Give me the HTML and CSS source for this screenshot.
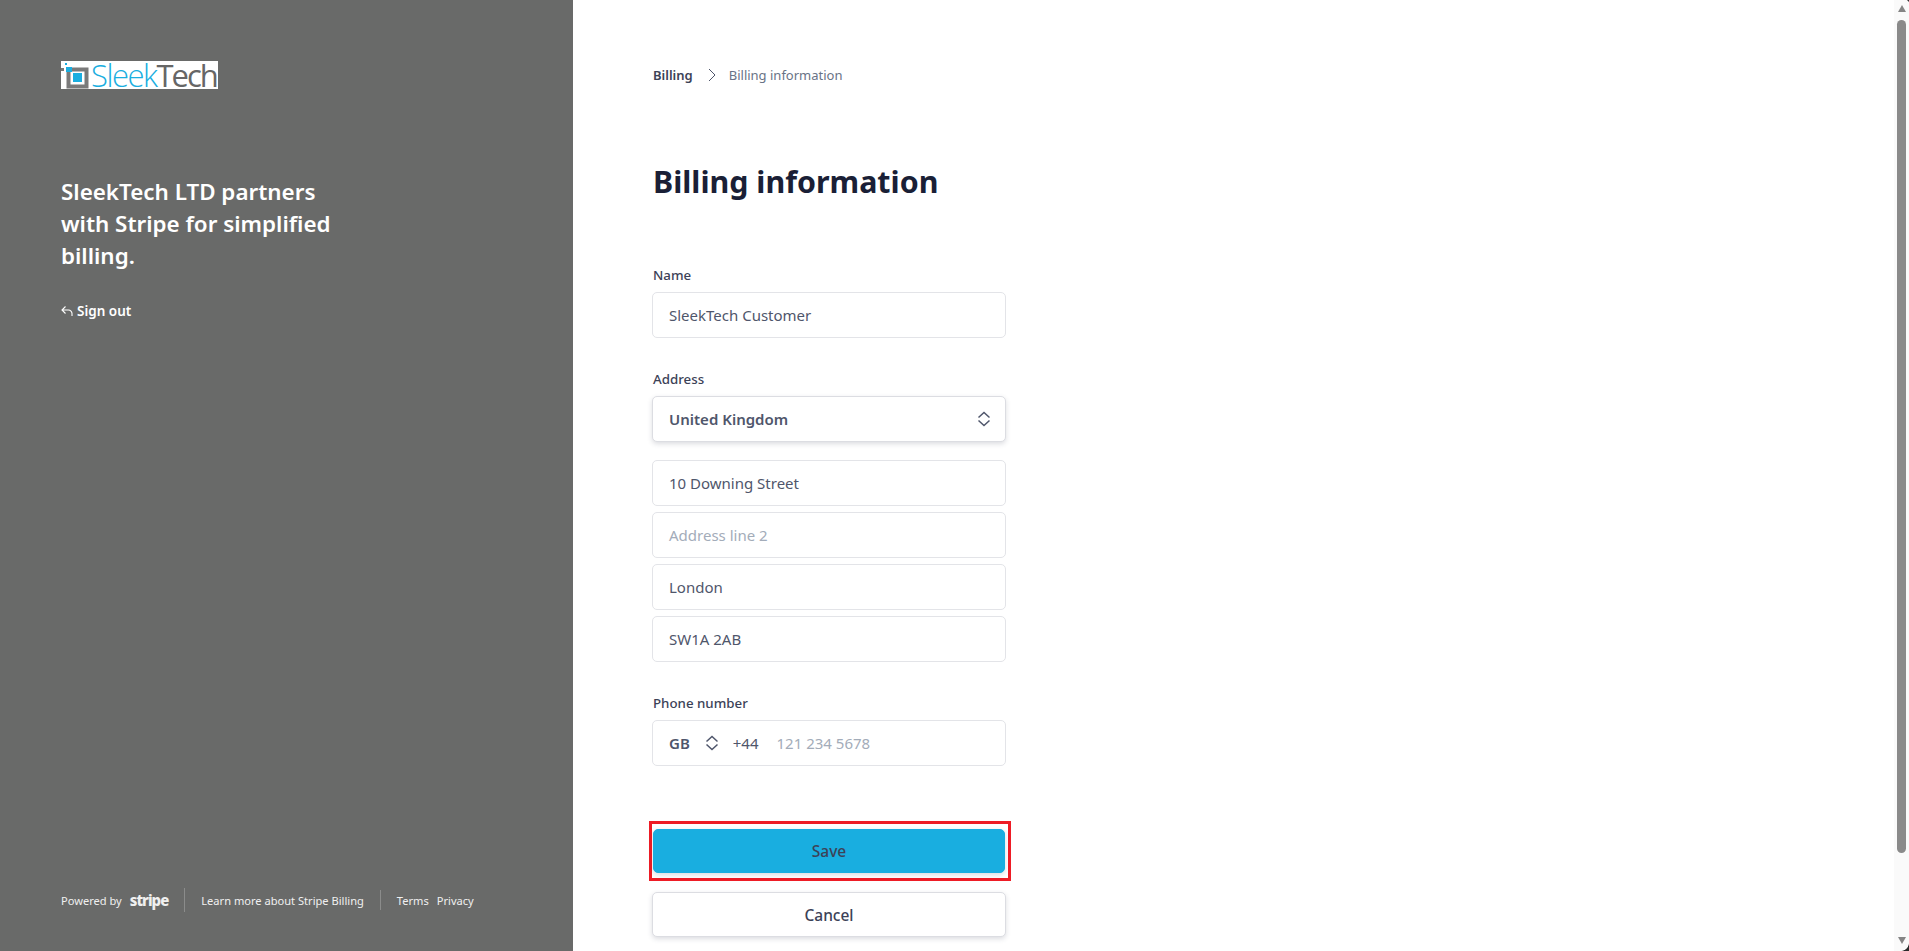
FILE: index.html
```html
<!DOCTYPE html>
<html lang="en">
<head>
  <meta charset="UTF-8" />
  <meta name="viewport" content="width=device-width, initial-scale=1.0"/>
  <title>Billing information</title>
  <link rel="stylesheet" href="styles.css">
</head>
<body>

  <aside class="sidebar">
    <div class="sidebar-top">
      <div class="logo">
        <svg class="logo-mark" width="29" height="28" viewBox="0 0 29 28">
          <rect x="0" y="7" width="3" height="3" fill="#777"/>
          <path d="M7.5 8.5H25.5V25.5H7.5Z" fill="none" stroke="#7a7a7a" stroke-width="4"/>
          <rect x="4" y="2" width="2" height="2" fill="#1aaee0"/>
          <rect x="5" y="6" width="6" height="5" fill="#1aaee0"/>
          <rect x="12" y="12" width="9" height="9" fill="#1aaee0"/>
        </svg>
        <span class="logo-text"><span class="logo-sleek">Sleek</span><span class="logo-tech">Tech</span></span>
      </div>
      <div class="tagline">SleekTech LTD partners with Stripe for simplified billing.</div>
      <div class="sign-out">
        <svg width="12" height="12" viewBox="0 0 12 12" fill="none" stroke="#fff" stroke-width="1.1">
          <path d="M4.5 1.5L1 5l3.5 3.5M1 5h6.5a3.5 3.5 0 0 1 3.5 3.5V11"/>
        </svg>
        <b>Sign out</b>
      </div>
    </div>

    <div class="sidebar-footer">
      <span>Powered by</span>
      <span class="stripe">stripe</span>
      <span class="divider"></span>
      <span>Learn more about Stripe Billing</span>
      <span class="divider short"></span>
      <span>Terms</span>
      <span class="privacy">Privacy</span>
    </div>
  </aside>

  <main class="content">
    <div class="breadcrumb">
      <b>Billing</b>
      <svg width="9" height="14" viewBox="0 0 9 14" fill="none" stroke="#4f566b" stroke-width="1">
        <path d="M2 1L8 7 2 13"/>
      </svg>
      <span>Billing information</span>
    </div>

    <h1>Billing information</h1>

    <label class="field-label name-label">Name</label>
    <div class="input">SleekTech Customer</div>

    <label class="field-label">Address</label>
    <div class="input select">
      <b>United Kingdom</b>
      <svg width="14" height="18" viewBox="0 0 14 18" fill="none" stroke="#4f566b" stroke-width="1.5">
        <path d="M1.5 7.5L7 2.5l5.5 5M1.5 10.5L7 15.5l5.5-5"/>
      </svg>
    </div>
    <div class="address-lines">
      <div class="input">10 Downing Street</div>
      <div class="input placeholder">Address line 2</div>
      <div class="input">London</div>
      <div class="input">SW1A 2AB</div>
    </div>

    <label class="field-label">Phone number</label>
    <div class="input phone">
      <b>GB</b>
      <svg width="14" height="18" viewBox="0 0 14 18" fill="none" stroke="#4f566b" stroke-width="1.5">
        <path d="M1.5 7.5L7 2.5l5.5 5M1.5 10.5L7 15.5l5.5-5"/>
      </svg>
      <span class="dial">+44</span>
      <span class="placeholder">121 234 5678</span>
    </div>

    <div class="save-wrap">
      <button class="button save"><span>Save</span></button>
    </div>
    <button class="button cancel"><span>Cancel</span></button>
  </main>

  <div class="scrollbar">
    <div class="arrow up"></div>
    <div class="thumb"></div>
    <div class="arrow down"></div>
  </div>

  <div class="corner corner-top"></div>
  <div class="corner corner-bottom"></div>

</body>
</html>
```

FILE: styles.css
```css
* {
  box-sizing: border-box;
}

html, body {
  height: 100%;
}

body {
  font-family: "Noto Sans", "Open Sans", Arial, sans-serif;
  margin: 0;
  padding: 0;
  background: #fff;
  color: #3c4257;
  display: flex;
  overflow: hidden;
  position: relative;
}

/* left panel */
.sidebar {
  width: 573px;
  flex-shrink: 0;
  background: #696a69;
  color: #fff;
  padding: 61px 61px 0;
  display: flex;
  flex-direction: column;
  justify-content: space-between;
}

.logo {
  width: 157px;
  height: 28px;
  background: #fff;
  display: flex;
}

.logo-mark {
  flex-shrink: 0;
}

.logo-text {
  font-family: "Open Sans", sans-serif;
  font-size: 31px;
  line-height: 28px;
  letter-spacing: -1.5px;
  margin-left: 1px;
  white-space: nowrap;
}

.logo-sleek {
  color: #1aaee0;
  font-weight: 300;
}

.logo-tech {
  color: #666;
  font-weight: 400;
  letter-spacing: -2px;
}

.tagline {
  width: 290px;
  margin-top: 87px;
  font-size: 22.4px;
  line-height: 32px;
  font-weight: 600;
}

.sign-out {
  margin-top: 29px;
  display: flex;
  align-items: center;
  gap: 4px;
  font-size: 13.5px;
  line-height: 20px;
}

.sign-out b {
  font-weight: 600;
}

.sidebar-footer {
  display: flex;
  align-items: center;
  height: 24px;
  margin-bottom: 39px;
  font-size: 11.1px;
  color: #f0f0f0;
  white-space: nowrap;
}

.stripe {
  font-size: 15px;
  font-weight: 800;
  letter-spacing: -1px;
  margin-left: 8px;
}

.divider {
  width: 1px;
  height: 24px;
  background: #8b8c8b;
  margin: 0 16px;
}

.divider.short {
  height: 20px;
}

.privacy {
  margin-left: 8px;
}

/* form */
.content {
  flex: 1;
  padding: 65px 0 0 79px;
}

.breadcrumb {
  display: flex;
  align-items: center;
  gap: 14px;
  height: 20px;
  margin-left: 1px;
  font-size: 13px;
  color: #697386;
}

.breadcrumb b {
  font-weight: 600;
  color: #3c4257;
}

.breadcrumb svg {
  margin-right: -1px;
}

h1 {
  margin: 75px 0 0 1px;
  font-size: 30.4px;
  line-height: 44px;
  font-weight: 700;
  color: #1a1f36;
}

.field-label {
  display: block;
  margin: 31px 0 7px 1px;
  height: 20px;
  line-height: 20px;
  font-size: 13.3px;
  font-weight: 500;
  color: #3c4257;
}

.name-label {
  margin-top: 61px;
}

.input {
  width: 354px;
  height: 46px;
  padding: 0 16px;
  display: flex;
  align-items: center;
  font-size: 15px;
  color: #4f566b;
  background: #fff;
  border: 1px solid #e3e4e8;
  border-radius: 5px;
}

.input.placeholder, .phone .placeholder {
  color: #a3acb9;
}

.select {
  justify-content: space-between;
  padding-right: 14px;
  border-color: #dcdde2;
  box-shadow: 0 2px 5px rgba(60, 66, 87, 0.18);
}

.select b, .phone b {
  font-weight: 600;
}

.address-lines {
  display: flex;
  flex-direction: column;
  gap: 6px;
  margin-top: 18px;
}

.phone svg {
  margin-left: 15px;
}

.dial {
  margin-left: 14px;
  margin-right: 18px;
}

.save-wrap {
  width: 362px;
  height: 60px;
  margin: 55px 0 0 -3px;
  padding: 5px 1px;
  border: 3px solid #ee1c25;
}

.button {
  display: block;
  width: 354px;
  height: 45px;
  font-family: inherit;
  font-size: 15.5px;
  font-weight: 500;
  color: #3c4257;
  background: #fff;
  border: 1px solid #dcdde2;
  border-radius: 5px;
  box-shadow: 0 2px 5px rgba(60, 66, 87, 0.18);
  padding: 0;
}

.save {
  width: 352px;
  height: 44px;
  background: #19aee0;
  border-color: #19aee0;
}

.cancel {
  margin-top: 11px;
}

/* browser scrollbar */
.scrollbar {
  width: 15px;
  flex-shrink: 0;
  background: #fafafa;
  display: flex;
  flex-direction: column;
  align-items: center;
}

.arrow {
  width: 0;
  height: 0;
  border-left: 4.5px solid transparent;
  border-right: 4.5px solid transparent;
  margin-top: 5px;
}

.arrow.up {
  border-bottom: 7px solid #858585;
}

.thumb {
  width: 9px;
  height: 833px;
  margin-top: 8px;
  background: #8a8a8a;
  border-radius: 5px;
}

.arrow.down {
  border-top: 7px solid #858585;
  margin-top: 84px;
}

/* window corners over the page */
.corner {
  position: absolute;
  right: 0;
}

.corner-top {
  top: 0;
  width: 3px;
  height: 3px;
  background: radial-gradient(circle at 0 100%, transparent 2.6px, #333 3.2px);
}

.corner-bottom {
  bottom: 0;
  width: 8px;
  height: 8px;
  background: radial-gradient(circle at 0 0, transparent 7.5px, #2b2b2b 8.2px);
}
```
